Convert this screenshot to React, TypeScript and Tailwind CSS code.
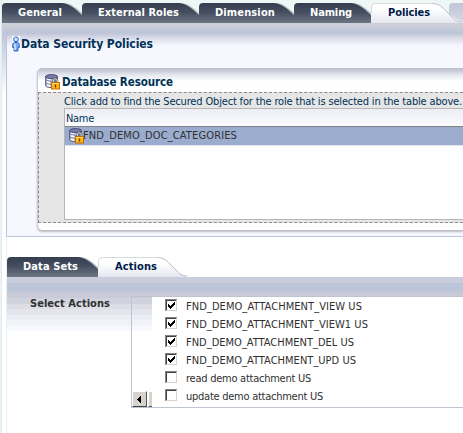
import { useLayoutEffect, useRef, useState } from "react";

/* Label that tracks its letters in or out to fill a given width. */
function Label({ text, width, className = "" }: { text: string; width: number; className?: string }) {
  const ref = useRef<HTMLSpanElement>(null);
  const [spacing, setSpacing] = useState(0);
  useLayoutEffect(() => {
    const el = ref.current;
    if (!el) return;
    el.style.letterSpacing = "0px";
    const next = (width - el.getBoundingClientRect().width) / text.length;
    el.style.letterSpacing = `${next}px`;
    setSpacing(next);
  }, [text, width]);
  return (
    <span ref={ref} className={`inline-block shrink-0 whitespace-nowrap ${className}`} style={{ letterSpacing: spacing }}>
      {text}
    </span>
  );
}

function DarkTab({ text, width, textWidth }: { text: string; width: number; textWidth: number }) {
  return (
    <div className="relative flex h-5 shrink-0 pl-4" style={{ width }}>
      <svg className="absolute inset-0" width={width} height="20">
        <defs>
          <linearGradient id="darkTab" x1="0" y1="0" x2="0" y2="1">
            <stop offset="0" stopColor="#353e50" />
            <stop offset="0.45" stopColor="#444e60" />
            <stop offset="1" stopColor="#6c7582" />
          </linearGradient>
        </defs>
        <path d={`M${width - 20} 0C${width - 10} 0 ${width - 6} 5 ${width} 10V12L${width - 20} 2Z`} fill="#b9bec4" />
        <path d={`M0 20V4Q0 0 4 0H${width - 20}C${width - 11} 1 ${width - 7} 6 ${width} 12V20Z`} fill="url(#darkTab)" />
      </svg>
      <Label text={text} width={textWidth} className="relative text-[11px] leading-5 font-bold text-white" />
    </div>
  );
}

function LightTab({ text, width, textWidth }: { text: string; width: number; textWidth: number }) {
  const slope = `C${width - 24} .5 ${width - 21} 3 ${width - 17} 7L${width - 10} 14C${width - 6} 18 ${width - 4} 19 ${width} 19`;
  return (
    <div className="relative flex h-5 shrink-0 pl-[17px]" style={{ width }}>
      <svg className="absolute inset-0" width={width} height="20">
        <defs>
          <linearGradient id="lightTab" x1="0" y1="0" x2="0" y2="1">
            <stop offset="0.3" stopColor="#ffffff" />
            <stop offset="1" stopColor="#e4e6ef" />
          </linearGradient>
        </defs>
        <path d={`M0 20V4Q0 .5 4 .5H${width - 30}${slope}V20Z`} fill="url(#lightTab)" />
        <path d={`M.5 10V4Q.5 .5 4 .5H${width - 30}`} fill="none" stroke="#d5dadd" />
        <path d={`M${width - 30} .5${slope}`} fill="none" stroke="#babec5" />
      </svg>
      <Label text={text} width={textWidth} className="relative text-[11px] leading-5 font-bold text-[#00194a]" />
    </div>
  );
}

function DatabaseLock() {
  return (
    <svg width="15" height="16" viewBox="0 0 15 16" className="shrink-0">
      <path d="M.7 2.7V12C2 14 10 14 12.3 12V2.7Z" fill="#c7cbe0" stroke="#55568b" />
      <path d="M2 4H5V13L2 12Z" fill="#f6f7fc" />
      <path d="M9 4H12V12L9 13Z" fill="#686ba0" />
      <ellipse cx="6.5" cy="2.6" rx="6" ry="2" fill="#777aa9" stroke="#494b7e" />
      <path d="M1 6Q6.5 9 12 6M1 9.3Q6.5 12 12 9.3" fill="none" stroke="#7779a6" />
      <path d="M8.4 9V7Q8.4 4.8 10.3 4.8T12.2 7V9" fill="none" stroke="#666" strokeWidth="2.2" />
      <path d="M8.4 9V7Q8.4 4.8 10.3 4.8T12.2 7V9" fill="none" stroke="#ddd" />
      <rect x="6.5" y="8.5" width="8" height="6.5" fill="#fdb813" stroke="#c86a00" />
      <path d="M7 9.5H14" stroke="#ffe36b" />
      <path d="M10.5 10.5V13.5" stroke="#6a3500" strokeWidth="1.3" />
    </svg>
  );
}

function Person() {
  return (
    <svg width="8" height="16" viewBox="0 0 8 16" className="shrink-0 bg-white">
      <circle cx="4" cy="3.3" r="2.4" fill="#b9dcff" stroke="#2c5fc9" />
      <path d="M2.5 6.5H5.5Q7.3 7 7.3 8.5V11.5H6V15H2V11.5H.7V8.5Q.7 7 2.5 6.5Z" fill="#77aaf3" stroke="#2c5fc9" />
      <path d="M3 7.5V14M3 2.5H4" stroke="#e3f3ff" strokeWidth="1.3" />
    </svg>
  );
}

function CheckBox({ checked }: { checked: boolean }) {
  return (
    <svg width="12" height="12" shapeRendering="crispEdges" className="shrink-0">
      <rect width="12" height="12" fill="#d6d3ce" />
      <path d="M0 0H12V1H1V12H0Z" fill="#848284" />
      <path d="M1 1H11V2H2V11H1Z" fill="#424142" />
      <rect x="2" y="2" width="9" height="9" fill="#fff" />
      {checked && <path d="M3 5h1v1h1v1h1v-1h1v-1h1v-1h1v-1h1v3h-1v1h-1v1h-1v1h-1v1h-1v-1h-1v-1h-1z" fill="#000" />}
    </svg>
  );
}

const actions = [
  { name: "FND_DEMO_ATTACHMENT_VIEW US", width: 176, checked: true },
  { name: "FND_DEMO_ATTACHMENT_VIEW1 US", width: 182, checked: true },
  { name: "FND_DEMO_ATTACHMENT_DEL US", width: 168, checked: true },
  { name: "FND_DEMO_ATTACHMENT_UPD US", width: 170, checked: true },
  { name: "read demo attachment US", width: 125, checked: false },
  { name: "update demo attachment US", width: 137, checked: false },
];

export default function App() {
  return (
    <div className="flex h-[433px] w-[463px] overflow-hidden bg-white font-['DejaVu_Sans_Condensed','DejaVu_Sans',sans-serif] text-[11px] [font-stretch:condensed]">
      <div className="w-0.5 shrink-0 border-r border-[#dfe9f0] bg-[#edf5f6]" />
      <div className="flex w-[461px] shrink-0 flex-col">
        <header className="flex h-[23px] shrink-0 overflow-hidden bg-[#eef6f6] pt-[3px]">
          <DarkTab text="General" width={80} textWidth={44} />
          <DarkTab text="External Roles" width={117} textWidth={81} />
          <DarkTab text="Dimension" width={95} textWidth={60} />
          <DarkTab text="Naming" width={77} textWidth={42} />
          <LightTab text="Policies" width={91} textWidth={42} />
          <div className="-ml-[13px] h-5 w-4 shrink-0 rounded-tl bg-linear-to-b from-[#bfc5d5] to-[#d9dce7] [clip-path:polygon(0_0,100%_0,100%_95%,60%_88%,0_55%)]" />
        </header>
        <div className="h-2.5 shrink-0 bg-linear-to-b from-[#cfd0db] via-[#c7cad8] to-[#bdc5d8]" />

        <section className="flex h-[204px] shrink-0 bg-linear-to-b from-[#bdc5d8] to-white to-30%">
          <div className="ml-1 flex w-[457px] shrink-0 flex-col rounded-tl-[5px] border-b border-l border-[#bdc5d9] bg-linear-to-b from-[#bdc4d7] via-[#dedfe9] via-[6px] to-[#f6f7ff] to-[13px]">
            <div className="flex h-[35px] shrink-0 items-start gap-px pt-[3px] pl-[5px]">
              <Person />
              <Label text="Data Security Policies" width={132} className="text-[12px] leading-4 font-bold text-[#003157]" />
            </div>
            <div className="ml-[30px] flex h-[162px] shrink-0 flex-col rounded-l-[5px] border-l border-[#c8cad4] bg-white bg-linear-to-b from-[#b9bdcb] via-[#e4e7ee] via-[7px] to-white to-[13px] shadow-[0_2px_2px_#bbbbc4]">
              <div className="flex h-6 shrink-0 items-start gap-0.5 pt-[6px] pl-[7px]">
                <DatabaseLock />
                <Label text="Database Resource" width={111} className="text-[11.5px] leading-4 font-bold text-[#003157]" />
              </div>
              <div className="flex h-[131px] shrink-0 flex-col border-y border-l border-dashed border-[#8c8c8c] bg-[#e6e6e6] pl-[25px]">
                <div className="flex h-[15px] shrink-0">
                  <Label text="Click add to find the Secured Object for the role that is selected in the table above." width={398} className="leading-[18px] text-[#003157]" />
                </div>
                <div className="flex h-[112px] shrink-0 flex-col border-y border-l border-[#b5b5b5] bg-white">
                  <div className="flex h-[18px] shrink-0 border-b border-[#848486] bg-linear-to-b from-[#eceef4] to-[#fafbff] pl-px">
                    <Label text="Name" width={28} className="leading-[19px] text-[#003157]" />
                  </div>
                  <div className="flex h-[18px] shrink-0 items-center bg-[#9cacce] pl-1">
                    <DatabaseLock />
                    <Label text="FND_DEMO_DOC_CATEGORIES" width={154} className="-ml-px leading-4 text-[#303030]" />
                  </div>
                  <div className="h-px shrink-0 bg-[#e1e4ee]" />
                </div>
              </div>
            </div>
          </div>
        </section>

        <section className="ml-1 flex grow flex-col border-l border-[#efeff3] pt-5">
          <div className="flex h-5 shrink-0">
            <DarkTab text="Data Sets" width={91} textWidth={55} />
            <LightTab text="Actions" width={89} textWidth={42} />
          </div>
          <div className="h-[6px] shrink-0 bg-[#cacddb]" />
          <div className="flex h-[150px] shrink-0 bg-[linear-gradient(to_bottom,#bdc5d8_8px,#c2c8d8_8px,#c2c8d8_10px,#c9cbd8_10px,#c9cbd8_15px,#d0d2de_15px,#d0d2de_21px,#dcdde7_21px,#dcdde7_26px,#e4e4ed_26px,#e4e4ed_32px,#eceef6_32px,#eceef6_37px,#f2f2f9_37px,#f2f2f9_43px,#f8f9ff_43px,#f8f9ff_48px,#fff_48px)] pt-[13px]">
            <Label text="Select Actions" width={80} className="ml-[23px] h-4 leading-[15px] font-bold text-[#303030]" />
            <div className="ml-[21px] flex h-[112px] w-[332px] shrink-0 border-y border-l border-[#bcc4d0]">
              <div className="flex w-5 items-end overflow-hidden">
                <div className="flex h-4 w-[15px] shrink-0 items-center justify-center border border-t-white border-r-[#555] border-b-[#444] border-l-white bg-[#d6d3ce]">
                  <svg width="5" height="7" shapeRendering="crispEdges"><path d="M4 0V7H3V6H2V5H1V4H0V3H1V2H2V1H3V0Z" /></svg>
                </div>
                <div className="ml-px h-[15px] w-1 border-b border-l border-b-[#555] border-l-white bg-[#d6d3ce]" />
              </div>
              <div className="flex-1 bg-white pl-[13px]">
                {actions.map((a) => (
                  <div key={a.name} className="flex h-[18px] items-start gap-[9px] pt-0.5">
                    <CheckBox checked={a.checked} />
                    <Label text={a.name} width={a.width} className="leading-[15px] text-[#303030]" />
                  </div>
                ))}
              </div>
            </div>
          </div>
        </section>
      </div>
    </div>
  );
}
